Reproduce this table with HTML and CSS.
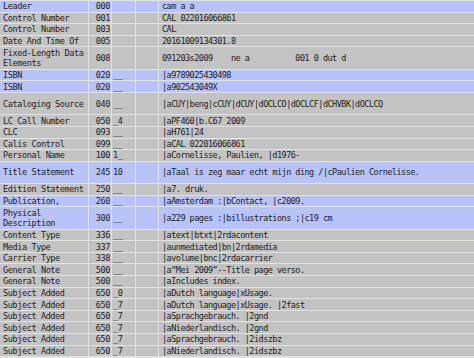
FILE: index.html
```html
<!DOCTYPE html>
<html>
<head>
<meta charset="utf-8">
<link rel="stylesheet" href="styles.css">
</head>
<body>
<div class="marc">
  <div class="row blue"><div class="c name">Leader</div><div class="c tag">000</div><div class="c ind"></div><div class="c x"></div><div class="c val">cam a a</div></div>
  <div class="row"><div class="c name">Control Number</div><div class="c tag">001</div><div class="c ind"></div><div class="c x"></div><div class="c val">CAL 022016066861</div></div>
  <div class="row"><div class="c name">Control Number</div><div class="c tag">003</div><div class="c ind"></div><div class="c x"></div><div class="c val">CAL</div></div>
  <div class="row"><div class="c name">Date And Time Of</div><div class="c tag">005</div><div class="c ind"></div><div class="c x"></div><div class="c val">20161009134301.8</div></div>
  <div class="row tall"><div class="c name">Fixed-Length Data Elements</div><div class="c tag">008</div><div class="c ind"></div><div class="c x"></div><div class="c val">091203s2009    ne a          001 0 dut d</div></div>
  <div class="row blue"><div class="c name">ISBN</div><div class="c tag">020</div><div class="c ind">__</div><div class="c x"></div><div class="c val">|a9789025430498</div></div>
  <div class="row blue"><div class="c name">ISBN</div><div class="c tag">020</div><div class="c ind">__</div><div class="c x"></div><div class="c val">|a902543049X</div></div>
  <div class="row tall"><div class="c name">Cataloging Source</div><div class="c tag">040</div><div class="c ind">__</div><div class="c x"></div><div class="c val">|aCUY|beng|cCUY|dCUY|dOCLCO|dOCLCF|dCHVBK|dOCLCQ</div></div>
  <div class="row"><div class="c name">LC Call Number</div><div class="c tag">050</div><div class="c ind">_4</div><div class="c x"></div><div class="c val">|aPF460|b.C67 2009</div></div>
  <div class="row"><div class="c name">CLC</div><div class="c tag">093</div><div class="c ind">__</div><div class="c x"></div><div class="c val">|aH761|24</div></div>
  <div class="row"><div class="c name">Calis Control</div><div class="c tag">099</div><div class="c ind">__</div><div class="c x"></div><div class="c val">|aCAL 022016066861</div></div>
  <div class="row"><div class="c name">Personal Name</div><div class="c tag">100</div><div class="c ind">1_</div><div class="c x"></div><div class="c val">|aCornelisse, Paulien, |d1976-</div></div>
  <div class="row tall blue"><div class="c name">Title Statement</div><div class="c tag">245</div><div class="c ind">10</div><div class="c x"></div><div class="c val">|aTaal is zeg maar echt mijn ding /|cPaulien Cornelisse.</div></div>
  <div class="row"><div class="c name">Edition Statement</div><div class="c tag">250</div><div class="c ind">__</div><div class="c x"></div><div class="c val">|a7. druk.</div></div>
  <div class="row blue"><div class="c name">Publication,</div><div class="c tag">260</div><div class="c ind">__</div><div class="c x"></div><div class="c val">|aAmsterdam :|bContact, |c2009.</div></div>
  <div class="row tall blue"><div class="c name">Physical Description</div><div class="c tag">300</div><div class="c ind">__</div><div class="c x"></div><div class="c val">|a229 pages :|billustrations ;|c19 cm</div></div>
  <div class="row"><div class="c name">Content Type</div><div class="c tag">336</div><div class="c ind">__</div><div class="c x"></div><div class="c val">|atext|btxt|2rdacontent</div></div>
  <div class="row"><div class="c name">Media Type</div><div class="c tag">337</div><div class="c ind">__</div><div class="c x"></div><div class="c val">|aunmediated|bn|2rdamedia</div></div>
  <div class="row"><div class="c name">Carrier Type</div><div class="c tag">338</div><div class="c ind">__</div><div class="c x"></div><div class="c val">|avolume|bnc|2rdacarrier</div></div>
  <div class="row"><div class="c name">General Note</div><div class="c tag">500</div><div class="c ind">__</div><div class="c x"></div><div class="c val">|a“Mei 2009”--Title page verso.</div></div>
  <div class="row"><div class="c name">General Note</div><div class="c tag">500</div><div class="c ind">__</div><div class="c x"></div><div class="c val">|aIncludes index.</div></div>
  <div class="row"><div class="c name">Subject Added</div><div class="c tag">650</div><div class="c ind">_0</div><div class="c x"></div><div class="c val">|aDutch language|xUsage.</div></div>
  <div class="row"><div class="c name">Subject Added</div><div class="c tag">650</div><div class="c ind">_7</div><div class="c x"></div><div class="c val">|aDutch language|xUsage. |2fast</div></div>
  <div class="row"><div class="c name">Subject Added</div><div class="c tag">650</div><div class="c ind">_7</div><div class="c x"></div><div class="c val">|aSprachgebrauch. |2gnd</div></div>
  <div class="row"><div class="c name">Subject Added</div><div class="c tag">650</div><div class="c ind">_7</div><div class="c x"></div><div class="c val">|aNiederlandisch. |2gnd</div></div>
  <div class="row"><div class="c name">Subject Added</div><div class="c tag">650</div><div class="c ind">_7</div><div class="c x"></div><div class="c val">|aSprachgebrauch. |2idszbz</div></div>
  <div class="row"><div class="c name">Subject Added</div><div class="c tag">650</div><div class="c ind">_7</div><div class="c x"></div><div class="c val">|aNiederlandisch. |2idszbz</div></div>
</div>
</body>
</html>
```

FILE: styles.css
```css
html, body {
  margin: 0;
  padding: 0;
  background: #e2e2e2;
}

.marc {
  display: flex;
  flex-direction: column;
  gap: 1px;
  padding-top: 1px;
  background: #e2e2e2;
  font-family: "DejaVu Sans Mono", "Liberation Mono", monospace;
  font-size: 8.5px;
  letter-spacing: -0.38px;
  color: #222222;
}

.row {
  display: grid;
  grid-template-columns: 88px 22px 23px 22px 1fr;
  column-gap: 1px;
  height: 10.6px;
}

.row.tall {
  height: 21.4px;
}

.c {
  background: #c3c3c3;
  display: flex;
  align-items: center;
  white-space: pre-wrap;
  line-height: 10px;
  min-width: 0;
}

.blue .c {
  background: #b8c3f9;
}

.name {
  padding-left: 3px;
}

.tag {
  justify-content: flex-end;
  padding-right: 1px;
}

.ind {
  padding-left: 1px;
}

.val {
  padding-left: 3px;
  letter-spacing: -0.52px;
}
```
